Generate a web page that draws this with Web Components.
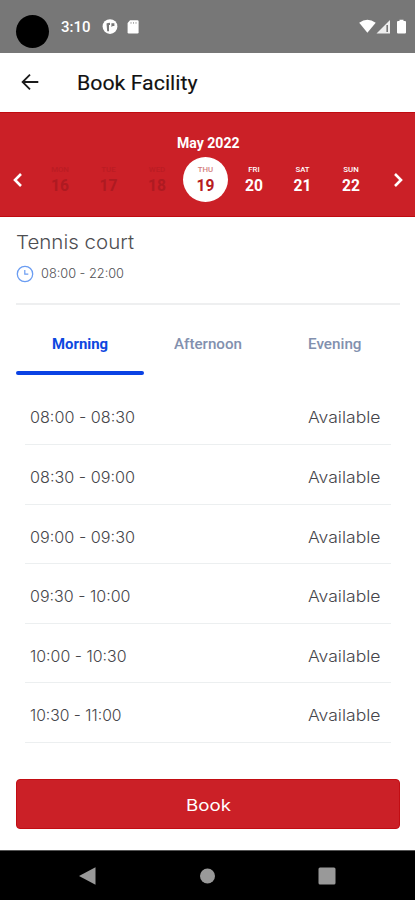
<!DOCTYPE html>
<html lang="en"><head><meta charset="utf-8"><title>Book Facility</title>
<style>html,body{margin:0;background:#fff}body{width:415px;height:900px;overflow:hidden}</style></head>
<body><booking-app></booking-app>
<script>
const define=(name,html,setup)=>customElements.define(name,class extends HTMLElement{
  connectedCallback(){
    if(this.shadowRoot)return;
    const t=document.createElement('template');t.innerHTML=html;
    this.attachShadow({mode:'open'}).append(t.content.cloneNode(true));
    if(setup)setup(this,this.shadowRoot);
  }
});

// A text run whose letters are widened to a given width in pixels.
define('wide-text',`<style>:host{display:block;white-space:nowrap}span{display:inline-block;transform-origin:0 50%}</style><span></span>`,(h,r)=>{
  const s=r.querySelector('span'),w=+h.getAttribute('width');
  s.textContent=h.getAttribute('text');
  h.style.width=w+'px';
  s.style.transform='scaleX('+w/s.getBoundingClientRect().width+')';
});

define('status-bar',`<style>
:host{display:flex;align-items:center;height:52.5px;box-sizing:border-box;background:#777;padding:2px 8px 0 16px;font:500 15.5px/18px Roboto,sans-serif;color:#fff}
.cam{width:33px;height:33px;border-radius:50%;background:#000;margin:9px 12px 0 0}
svg{display:block}.rt{margin-left:auto}
</style><div class="cam"></div><wide-text text="3:10" width="29.5"></wide-text>
<svg style="margin-left:11px" width="38" height="16" viewBox="0 0 38 16"><circle cx="8" cy="7.6" r="7.4" fill="#fff"/><path d="M4.5 4.5Q5.5 3.8 8 3.8V6H7v6.2H5.2zM9.4 4.2h3v2.7h-1.6L9.4 8z" fill="#777"/><path d="M28 1.3h7.4q1.2 0 1.2 1.2v10.8q0 1.2-1.2 1.2h-8.6q-1.2 0-1.2-1.2V4z" fill="#fff"/><path d="M29 3v1.8M31.5 3v1.8M34 3v1.8" stroke="#aaa"/></svg>
<svg class="rt" width="48" height="16" viewBox="0 0 48 16"><path d="M.2 3.8Q8.3-2.3 16.7 3.8L8.4 13.8z" fill="#fff"/><path d="M17.5 14.5L31 1v13.5z" fill="#eee"/><path d="M28.2 6v7" stroke="#777" stroke-width="1.6"/><path d="M38 3q0-1 1-1h1.5V.7h4V2H46q1 0 1 1v10.5q0 1-1 1h-7q-1 0-1-1z" fill="#fff"/></svg>`);

define('app-header',`<style>
:host{display:flex;align-items:center;height:59.5px;box-sizing:border-box;background:#fff;padding:2px 0 0 21px;font:400 20.5px/26px Roboto,sans-serif;color:#111;-webkit-text-stroke:.15px #111}
svg{margin:-3px 38px 0 0}</style>
<svg width="18" height="18" viewBox="0 0 18 18" fill="none" stroke="#1b1b1b" stroke-width="1.8"><path d="M17.3 9H2M9 1.6L1.6 9 9 16.4"/></svg>
<wide-text text="Book Facility" width="120.5"></wide-text>`);

define('day-cell',`<style>
:host{display:flex;flex-direction:column;align-items:center;justify-content:center;width:45px;height:45px;border-radius:50%;color:#fff;font-family:Roboto,sans-serif;font-weight:700}
:host([off]){color:#ae1a21}:host([on]){background:#fff;color:#b71c22}
.d{font-size:7.8px;line-height:9px;font-weight:500}:host([on]) .d{opacity:.6}:host([off]) .d{opacity:.55}
.n{font-size:15.6px;line-height:18px;margin-top:3px}
</style><span class="d"></span><span class="n"></span>`,(h,r)=>{
  r.querySelector('.d').textContent=h.getAttribute('day');r.querySelector('.n').textContent=h.getAttribute('num');
});

define('week-strip',`<style>
:host{display:block;height:105px;box-sizing:border-box;background:#cb2027;border-top:1px solid #c00b10;border-bottom:1px solid #c00b10;padding-top:20px}
.m{display:flex;justify-content:center;font:700 14.3px/20px Roboto,sans-serif;color:#fff;padding-left:1px}
.w{display:flex;align-items:center;justify-content:space-between;padding:4px 12px 0 13px}
.days{display:flex;gap:3.5px;margin-right:5px}svg{display:block}
</style><div class="m"><wide-text text="May 2022" width="62.5"></wide-text></div>
<div class="w"><svg width="9" height="14" viewBox="0 0 9 14" fill="none" stroke="#fff" stroke-width="2.6"><path d="M8 1L2 7l6 6"/></svg>
<div class="days"><day-cell day="MON" num="16" off></day-cell><day-cell day="TUE" num="17" off></day-cell><day-cell day="WED" num="18" off></day-cell><day-cell day="THU" num="19" on></day-cell><day-cell day="FRI" num="20"></day-cell><day-cell day="SAT" num="21"></day-cell><day-cell day="SUN" num="22"></day-cell></div>
<svg width="9" height="14" viewBox="0 0 9 14" fill="none" stroke="#fff" stroke-width="2.6"><path d="M1 1l6 6-6 6"/></svg></div>`);

define('facility-info',`<style>
:host{display:block;height:87.5px;box-sizing:border-box;margin:0 15px 0 16px;border-bottom:2px solid #eeeff0;padding-top:12px;font-family:Inter,sans-serif;font-weight:300;color:#4e4e52}
.t{font-size:19.3px;line-height:26px}.h{display:flex;align-items:center;gap:7px;margin-top:9px;font-size:12.4px;line-height:18px;color:#505054}
.h wide-text{padding-top:1px}
</style><wide-text class="t" text="Tennis court" width="118"></wide-text>
<div class="h"><svg width="18" height="18" viewBox="0 0 18 18" fill="none" stroke="#6b9df2"><circle cx="9" cy="9" r="7.7" stroke-width="1.3"/><path d="M8.8 5v4.2h3.5" stroke-width="1.2"/></svg><wide-text text="08:00 - 22:00" width="83"></wide-text></div>`);

define('tab-item',`<style>
:host{display:flex;align-items:center;justify-content:center;flex:1;box-sizing:border-box;height:70.5px;padding-top:13px;border-bottom:4px solid transparent;font:500 14.8px/20px Roboto,sans-serif;color:#8290ae}
:host([on]){color:#0d47e0;font-weight:700;position:relative;border:0;padding-bottom:4px}
:host([on])::after{content:"";position:absolute;left:0;right:0;bottom:0;height:4px;border-radius:2px;background:#0a42e4}
</style><slot></slot>`);
define('tab-row',`<style>:host{display:flex;margin:0 16px}</style><slot></slot>`);

define('slot-row',`<style>
:host{display:flex;align-items:flex-end;justify-content:space-between;height:59.6px;box-sizing:border-box;margin:0 24px 0 25px;padding:0 10.5px 14.6px 5px;border-bottom:1.6px solid #eceff0;font:300 15.2px/22px Inter,sans-serif;color:#45454a}
</style><wide-text></wide-text><wide-text text="Available" width="72.5"></wide-text>`,(h,r)=>{
  const old=r.querySelector('wide-text'),t=document.createElement('wide-text');
  t.setAttribute('text',h.getAttribute('time'));t.setAttribute('width',h.getAttribute('w'));old.replaceWith(t);
});

define('book-button',`<style>
:host{display:flex;align-items:center;justify-content:center;height:50px;box-sizing:border-box;margin:36px 15px 0 16px;padding-top:2px;background:#cb2027;border:1px solid #c20d13;border-radius:4px;color:#fff;font:400 16.3px/22px Inter,sans-serif}
</style><wide-text text="Book" width="45"></wide-text>`);

define('nav-bar',`<style>
:host{display:flex;align-items:center;justify-content:space-between;height:50px;box-sizing:border-box;margin-top:auto;background:#000;border-top:1px solid #555;padding:0 79px}
svg{display:block}</style>
<svg width="17" height="18"><path d="M0 9L16.5 .3V17.7z" fill="#999"/></svg>
<svg width="16" height="16"><circle cx="8.5" cy="8" r="7.5" fill="#999"/></svg>
<svg width="18" height="18"><rect x=".5" y=".5" width="17" height="17" rx="1.5" fill="#999"/></svg>`);

define('booking-app',`<style>:host{display:flex;flex-direction:column;width:415px;height:900px;background:#fff}
.list{padding-top:10.4px}</style>
<status-bar></status-bar><app-header></app-header><week-strip></week-strip><facility-info></facility-info>
<tab-row><tab-item on><wide-text text="Morning" width="56"></wide-text></tab-item><tab-item><wide-text text="Afternoon" width="68"></wide-text></tab-item><tab-item><wide-text text="Evening" width="53.5"></wide-text></tab-item></tab-row>
<div class="list">
<slot-row time="08:00 - 08:30" w="105"></slot-row><slot-row time="08:30 - 09:00" w="105"></slot-row><slot-row time="09:00 - 09:30" w="105"></slot-row><slot-row time="09:30 - 10:00" w="100.5"></slot-row><slot-row time="10:00 - 10:30" w="96.5"></slot-row><slot-row time="10:30 - 11:00" w="91.5"></slot-row></div>
<book-button></book-button><nav-bar></nav-bar>`);
</script></body></html>
